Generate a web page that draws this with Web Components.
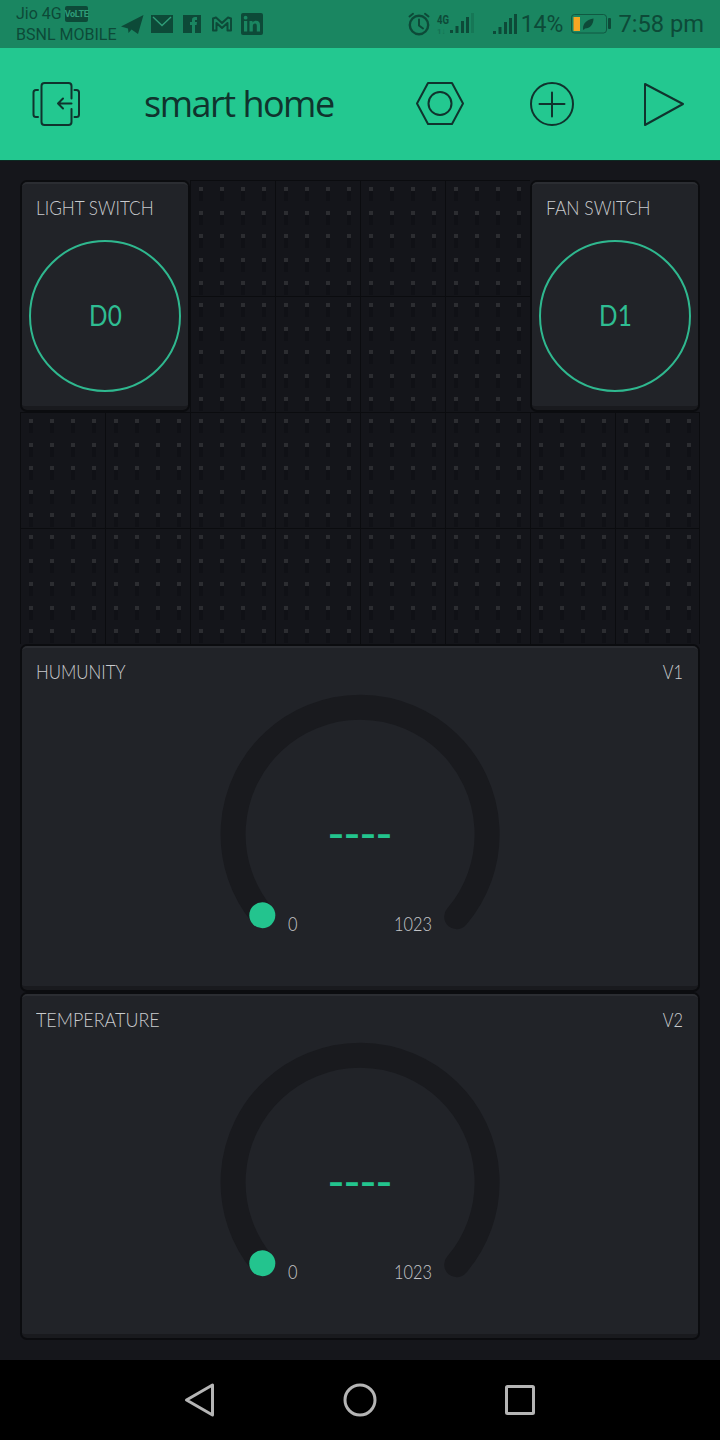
<!DOCTYPE html>
<html>
<head>
<meta charset="utf-8">
<title>smart home</title>
<style>
  html, body { margin: 0; padding: 0; background: #15161b; }
  body { width: 720px; height: 1440px; overflow: hidden; display: flex; flex-direction: column; font-family: Lato, "Liberation Sans", sans-serif; }
</style>
</head>
<body>
<status-bar></status-bar>
<app-header title="smart home"></app-header>
<widget-board>
  <switch-widget label="LIGHT SWITCH" pin="D0" style="--squeeze: .88; grid-column: 1 / span 2; grid-row: 1 / span 2"></switch-widget>
  <switch-widget label="FAN SWITCH" pin="D1" style="--squeeze: .897; grid-column: 7 / span 2; grid-row: 1 / span 2"></switch-widget>
  <gauge-widget label="HUMUNITY" pin="V1" style="--squeeze: .865; grid-column: 1 / span 8; grid-row: 5 / span 3"></gauge-widget>
  <gauge-widget label="TEMPERATURE" pin="V2" style="--squeeze: .918; grid-column: 1 / span 8; grid-row: 8 / span 3"></gauge-widget>
</widget-board>
<nav-bar></nav-bar>

<script>
class StatusBar extends HTMLElement {
  connectedCallback() {
    const ink = '#0d4a38';
    const bars = `<rect x="0" y="17" width="3" height="3"/><rect x="5.500" y="13" width="3" height="7"/><rect x="11" y="8" width="3" height="12"/><rect x="16" y="4" width="3" height="16"/>`;
    this.attachShadow({ mode: 'open' });
    this.shadowRoot.innerHTML = `
      <style>
        :host { display: flex; flex: none; height: 48px; background: #1a8661; color: ${ink}; font-family: Roboto, "Liberation Sans", sans-serif; align-items: center; }
        svg { display: block; flex: none; }
        .carrier { width: 104px; margin-left: 16px; font-size: 16px; line-height: 22px; white-space: nowrap; }
        .carrier div { display: flex; align-items: center; height: 21px; }
        .volte { background: ${ink}; color: #2f9d78; font-size: 9px; font-weight: 700; letter-spacing: -.3px; width: 23px; height: 16px; line-height: 16px; text-align: center; border-radius: 2px; margin-left: 3px; }
        .icons { display: flex; align-items: center; }
        .right { margin-left: auto; margin-right: 16px; display: flex; align-items: center; }
        .pct { font-size: 23px; margin: 0 7px 0 3px; }
        .time { font-size: 23.700px; margin-left: 6px; }
      </style>
      <div class="carrier">
        <div>Jio 4G<span class="volte">VoLTE</span></div>
        <div>BSNL MOBILE</div>
      </div>
      <div class="icons">
        <svg width="24" height="22" viewBox="120 14 24 22" fill="${ink}"><path d="M121 27.500 143.500 16 138 35 131.500 30.500 128.500 34 128 29.500Z"/></svg>
        <svg width="22" height="18" viewBox="151 16 22 18" style="margin-left:7px"><rect x="151" y="16" width="22" height="18" fill="${ink}"/><path d="M153 18 162 26.500 171 18" fill="none" stroke="#2f9d78" stroke-width="1.400"/></svg>
        <svg width="18" height="18" viewBox="183 16 18 18" style="margin-left:10px"><rect x="183" y="16" width="18" height="18" fill="${ink}"/><path d="M192 34V26H190V23H192V21C192 18.800 193.400 18 195 18H197V21H195.600C195 21 195 21.300 195 22V23H197L196.600 26H195V34Z" fill="#1a8661"/></svg>
        <svg width="22" height="16" viewBox="211 17 22 16" style="margin-left:10px"><path d="M213 31.500V19.500L216 18.500 222 24 228 18.500 231 19.500V31.500H227.500V24L222 29 216.500 24V31.500Z" fill="none" stroke="${ink}" stroke-width="2" stroke-linejoin="round"/></svg>
        <svg width="22" height="22" viewBox="241 14 22 22" style="margin-left:8px"><rect x="241" y="14" width="22" height="22" rx="2" fill="${ink}"/><g fill="#1a8661"><rect x="244" y="22" width="3.200" height="10.500"/><circle cx="245.600" cy="18.700" r="1.900"/><path d="M249.500 22H252.500V23.600C253.200 22.500 254.400 21.800 256 21.800 258.900 21.800 260 23.400 260 26.300V32.500H256.800V26.900C256.800 25.400 256.400 24.500 255.100 24.500 253.600 24.500 252.800 25.400 252.800 27V32.500H249.500Z"/></g></svg>
      </div>
      <div class="right">
        <svg width="24" height="24" viewBox="407 12 24 24" fill="none" stroke="${ink}" stroke-width="2.400" stroke-linecap="round"><circle cx="419" cy="25" r="9.200"/><path d="M419 19.500V25.500L423 28.500" stroke-width="2"/><path d="M409.500 16.500 413 13.800M428.500 16.500 425 13.800" stroke-width="2"/></svg>
        <svg width="38" height="24" viewBox="0 0 38 24" style="margin-left:5px" fill="${ink}"><text x="1" y="12" font-family="Roboto, sans-serif" font-size="13" font-weight="700" textLength="12" lengthAdjust="spacingAndGlyphs">4G</text><text x="1" y="21.500" font-family="Roboto, sans-serif" font-size="8" font-weight="700" opacity=".35">1↓</text><g transform="translate(14 1)">${bars}<rect x="21" y="0" width="3" height="20" opacity=".25"/></g></svg>
        <svg width="26" height="22" viewBox="0 0 26 22" style="margin-left:18px" fill="${ink}"><g transform="translate(1 1)">${bars}<rect x="21" y="0" width="3" height="20"/></g></svg>
        <span class="pct">14%</span>
        <svg width="42" height="22" viewBox="570 13 42 22"><rect x="571.500" y="14.500" width="35" height="18.500" rx="3" fill="none" stroke="${ink}" stroke-width="1" opacity=".75"/><rect x="573.500" y="17" width="6.500" height="14" fill="#f5a623"/><path d="M583 29C583 23 587 19.500 593.500 18.500 593.500 24.500 590 28.500 585 28.500L583.500 30Z" fill="${ink}"/><rect x="608" y="18" width="3" height="11" rx="1" fill="${ink}"/></svg>
        <span class="time">7:58 pm</span>
      </div>
    `;
  }
}

class AppHeader extends HTMLElement {
  connectedCallback() {
    const title = this.getAttribute('title');
    this.attachShadow({ mode: 'open' });
    this.shadowRoot.innerHTML = `
      <style>
        :host { display: flex; flex: none; height: 112px; background: #23c890; color: #10332d; align-items: center; padding: 0 32px; box-sizing: border-box; }
        svg { display: block; fill: none; stroke: #10332d; stroke-width: 2; stroke-linejoin: round; stroke-linecap: round; }
        h1 { margin: -2px 0 0 64px; font: 400 36px "Open Sans", sans-serif; letter-spacing: -1.500px; }
        .actions { margin-left: auto; display: flex; gap: 64px; }
      </style>
      <svg width="48" height="48" viewBox="32 80 48 48"><path d="M71.500 98.500V86C71.500 84 70.500 83 68.500 83H44.500C42.500 83 41.500 84 41.500 86V122C41.500 124 42.500 125 44.500 125H68.500C70.500 125 71.500 124 71.500 122V109M71.500 103.500H58M63 98.500 58 103.500 63 108.500M38 90H36C34.500 90 33.500 91 33.500 92.500V114.500C33.500 116 34.500 117 36 117H38M74.500 90H76.500C78 90 79 91 79 92.500V114.500C79 116 78 117 76.500 117H74.500"/></svg>
      <h1>${title}</h1>
      <div class="actions">
        <svg width="48" height="48" viewBox="416 80 48 48"><path d="M417 103.500 428 83H452L463 103.500 452 124H428Z"/><circle cx="440" cy="103.500" r="11.500"/></svg>
        <svg width="48" height="48" viewBox="528 80 48 48"><circle cx="552" cy="104" r="21"/><path d="M539.500 104H564.500M552 92.500V116.500"/></svg>
        <svg width="48" height="48" viewBox="640 80 48 48"><path d="M645 84 683 104 645 125Z"/></svg>
      </div>
    `;
  }
}

class GridCell extends HTMLElement {
  connectedCallback() {
    let dots = '';
    [7, 31, 54, 78, 101].forEach(y => {
      [9, 30, 51, 72].forEach(x => {
        dots += `<rect x="${x}" y="${y + 4}" width="4" height="10" fill="#101116"/><rect x="${x}" y="${y}" width="4" height="4" fill="#2c2d31"/>`;
      });
    });
    this.attachShadow({ mode: 'open' });
    this.shadowRoot.innerHTML = `
      <style>
        :host { display: block; background: #14151a; border-left: 1px solid #0b0c0f; border-top: 1px solid #0b0c0f; }
        :host([last]) { border-right: 1px solid #0b0c0f; }
        svg { display: block; margin: -1px 0 0 -1px; }
      </style>
      <svg width="85" height="116">${dots}</svg>
    `;
  }
}

class WidgetBoard extends HTMLElement {
  connectedCallback() {
    let cells = '';
    for (let row = 1; row <= 4; row++) {
      for (let col = 1; col <= 8; col++) {
        if (row <= 2 && (col <= 2 || col >= 7)) continue;
        cells += `<grid-cell ${col === 8 ? 'last' : ''} style="grid-column:${col};grid-row:${row}"></grid-cell>`;
      }
    }
    this.attachShadow({ mode: 'open' });
    this.shadowRoot.innerHTML = `
      <style>
        :host { display: grid; flex: 1; grid-template-columns: repeat(8, 85px); grid-auto-rows: 116px; align-content: start; padding: 19px 0 0 20px; background: #15161b; border-top: 1px solid #0c2a22; box-sizing: border-box; }
      </style>
      ${cells}
      <slot></slot>
    `;
  }
}

class WidgetCard extends HTMLElement {
  // base for the two widgets, the frame and the title row are the same
  frame(body, extraStyle) {
    const label = this.getAttribute('label');
    const pin = this.getAttribute('pin');
    this.attachShadow({ mode: 'open' });
    this.shadowRoot.innerHTML = `
      <style>
        :host { display: block; position: relative; z-index: 1; background: #0b0c0f; padding: 2px; border-radius: 7px; min-height: 0; }
        .card { box-sizing: border-box; height: 100%; background: #212328; border-radius: 5px; border-top: 2px solid #2b2d32; border-bottom: 4px solid #191a1e; display: flex; flex-direction: column; font-family: Lato, "Liberation Sans", sans-serif; }
        .head { display: flex; justify-content: space-between; padding: 12px 14px 0; line-height: 24px; height: 24px; font-size: 19.500px; font-weight: 300; color: #c9cbce; white-space: nowrap; }
        .label { display: inline-block; transform: scaleX(var(--squeeze, .89)); transform-origin: left center; }
        .pin { display: inline-block; transform: scaleX(.84); transform-origin: right center; margin-right: 1px; }
        ${extraStyle}
      </style>
      <div class="card">
        <div class="head"><span class="label">${label}</span>${this.headPin ? `<span class="pin">${pin}</span>` : ''}</div>
        ${body}
      </div>
    `;
  }
}

class SwitchWidget extends WidgetCard {
  connectedCallback() {
    this.frame(`<div class="btn"><span>${this.getAttribute('pin')}</span></div>`, `
      .btn { box-sizing: border-box; width: 152px; height: 152px; margin: 20px auto 0; padding-bottom: 4px; border: 2px solid #2fb88f; border-radius: 50%; display: flex; align-items: center; justify-content: center; color: #2fbd92; font-size: 29px; font-weight: 400; }
      .btn span { display: inline-block; transform: scaleX(.84); }
    `);
  }
}

class GaugeWidget extends WidgetCard {
  connectedCallback() {
    this.headPin = true;
    this.frame(`
      <div class="gauge">
        <svg width="300" height="260" viewBox="210 684 300 260">
          <path d="M262.300 915.300A127 127 0 1 1 456.700 916.700" fill="none" stroke="#191a1e" stroke-width="25" stroke-linecap="round"/>
          <circle cx="262.300" cy="915.300" r="13" fill="#23c48e"/>
        </svg>
        <span class="value">----</span>
        <span class="min">0</span>
        <span class="max">1023</span>
      </div>
    `, `
      .gauge { position: relative; width: 300px; height: 260px; margin: 0 auto; }
      svg { display: block; }
      .value { position: absolute; left: 0; right: 0; top: 121px; text-align: center; font: 400 48px/56px "Liberation Sans", sans-serif; color: #23c48e; }
      .min, .max { position: absolute; top: 229px; line-height: 22px; font-size: 19px; font-weight: 300; color: #c4c6c9; transform: scaleX(.86); transform-origin: left center; }
      .min { left: 78px; }
      .max { left: 184px; }
    `);
  }
}

class NavBar extends HTMLElement {
  connectedCallback() {
    this.attachShadow({ mode: 'open' });
    this.shadowRoot.innerHTML = `
      <style>
        :host { display: flex; flex: none; height: 80px; background: #000; align-items: center; justify-content: center; gap: 120px; }
        svg { display: block; fill: none; stroke: #b5b5b5; stroke-width: 3; stroke-linejoin: round; }
      </style>
      <svg width="40" height="40" viewBox="180 1380 40 40"><path d="M186.500 1400 212.500 1385V1415Z"/></svg>
      <svg width="40" height="40" viewBox="340 1380 40 40"><circle cx="360" cy="1400" r="15"/></svg>
      <svg width="40" height="40" viewBox="500 1380 40 40"><rect x="506.500" y="1386.500" width="27" height="27" rx="1"/></svg>
    `;
  }
}

customElements.define('status-bar', StatusBar);
customElements.define('app-header', AppHeader);
customElements.define('grid-cell', GridCell);
customElements.define('widget-board', WidgetBoard);
customElements.define('switch-widget', SwitchWidget);
customElements.define('gauge-widget', GaugeWidget);
customElements.define('nav-bar', NavBar);
</script>
</body>
</html>
